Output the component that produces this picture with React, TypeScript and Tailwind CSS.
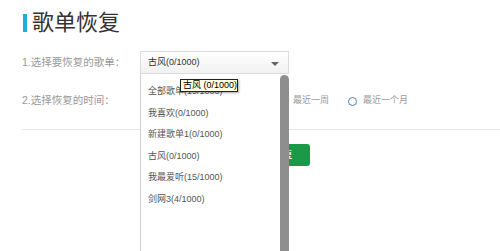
import React from 'react';

const playlists = [
    '全部歌单(19/1000)',
    '我喜欢(0/1000)',
    '新建歌单1(0/1000)',
    '古风(0/1000)',
    '我最爱听(15/1000)',
    '剑网3(4/1000)',
];

const ranges = [
    { label: '最近一天', gap: 'mr-[17px]' },
    { label: '最近三天', gap: 'mr-[17px]' },
    { label: '最近一周', gap: 'mr-[19px]' },
    { label: '最近一个月', gap: 'mr-0' },
];

export default function App() {
    return (
        <div className="relative h-[251px] w-[500px] overflow-hidden bg-white font-['Liberation_Sans','Noto_Sans_CJK_SC',sans-serif]">
            {/* title */}
            <div className="flex items-center pl-[23px] pt-[10px]">
                <div className="h-[18px] w-[4px] bg-[#19b2d6]" />
                <h1 className="ml-[5px] text-[22px] leading-[26px] text-[#333]">歌单恢复</h1>
            </div>

            {/* step 1 */}
            <div className="mt-[15px] flex h-[23px] items-center pl-[22px]">
                <span className="w-[118px] whitespace-nowrap text-[10.5px] text-[#999]">1.选择要恢复的歌单：</span>
                <div className="relative z-10 flex h-[23px] w-[149px] items-center border border-[#dcdcdc] bg-gradient-to-b from-white to-[#f1f1f1] pl-[7px]">
                    <span className="text-[9px] text-[#333]">古风(0/1000)</span>
                    <span className="absolute right-[9px] top-[10px] h-0 w-0 border-x-[4px] border-t-[4px] border-x-transparent border-t-[#666]" />

                    <div className="absolute left-[-1px] top-[22px] h-[190px] w-[149px] border-l border-[#cfcfcf] bg-white pt-[7px]">
                        {playlists.map((name) => (
                            <div key={name} className="h-[21.5px] pl-[7px] text-[9px] leading-[21.5px] text-[#555]">
                                {name}
                            </div>
                        ))}
                        <div className="absolute right-0 top-[1px] h-full w-[9px] rounded-t-[5px] bg-[#8e8e8e]" />
                        <div className="absolute left-[39px] top-[5px] h-[13px] w-[58px] whitespace-nowrap border border-[#222] bg-[#ffffe1] px-[2px] text-[9px] leading-[11px] text-black shadow-[1px_1px_2px_rgba(0,0,0,0.35)]">
                            古风 (0/1000)
                        </div>
                    </div>
                </div>
            </div>

            {/* step 2 */}
            <div className="mt-[16px] flex h-[22px] items-center pl-[22px]">
                <span className="w-[120px] whitespace-nowrap text-[10.5px] text-[#999]">2.选择恢复的时间：</span>
                <div className="flex items-center">
                    {ranges.map((r) => (
                        <label key={r.label} className={`flex items-center ${r.gap}`}>
                            <span className="h-[9px] w-[9px] rounded-full border border-[#4d7fb8] bg-white" />
                            <span className="ml-[6px] whitespace-nowrap text-[9px] text-[#999]">{r.label}</span>
                        </label>
                    ))}
                </div>
            </div>

            <div className="ml-[22px] mt-[17px] border-t border-[#e6e6e6]" />

            <button className="ml-[256px] mt-[14px] h-[22px] w-[54px] rounded-[3px] bg-[#1b9848] text-[9.5px] text-white">
                恢复
            </button>
        </div>
    );
}
